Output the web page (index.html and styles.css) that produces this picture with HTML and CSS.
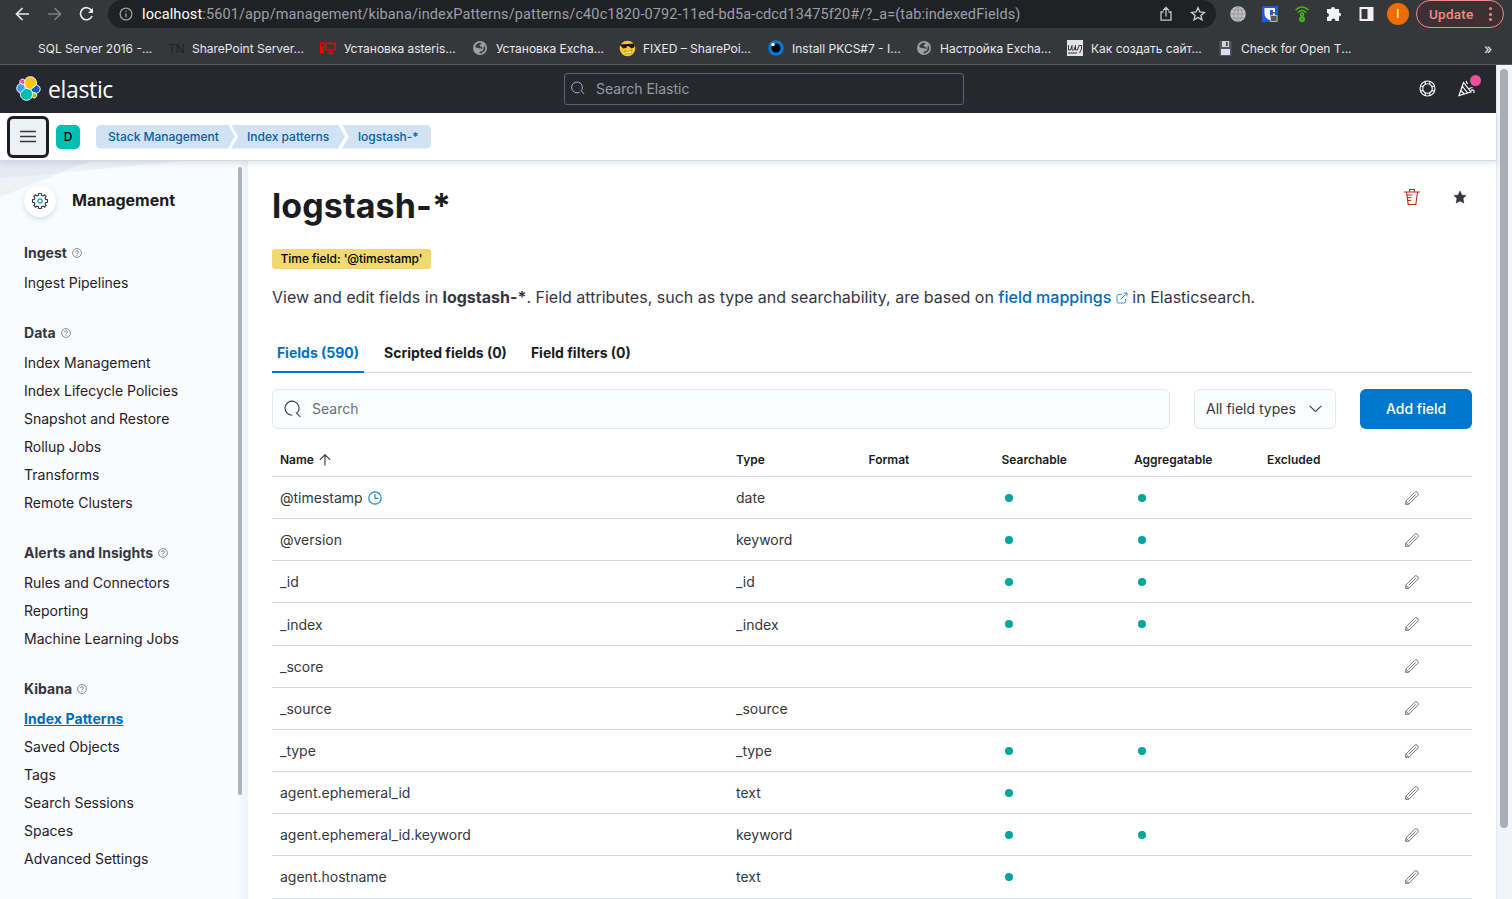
FILE: index.html
```html
<!DOCTYPE html>
<html lang="en">
<head>
<meta charset="utf-8">
<title>logstash-* - Elastic</title>
<link rel="stylesheet" href="styles.css">
</head>
<body>
<svg class="defs" width="0" height="0" aria-hidden="true">
  <symbol id="globe" viewBox="0 0 14 14"><circle cx="7" cy="7" r="7" fill="#9aa0a6"/><path d="M2 5 5 2 8 1.800 8.500 3 6.500 4 7 5.500 9 6 9.500 8 8 7.500 5 7 3 6.500ZM11 4 12.500 7 11.500 10 8 12.500 6 12 7.500 10.500 10 9.500 10.500 7Z" fill="#3a3b3f"/></symbol>
  <symbol id="help" viewBox="0 0 10 10"><circle cx="5" cy="5" r="4.400" fill="none" stroke="#7b808b" stroke-width=".9"/><path d="M3.600 4.100a1.400 1.300 0 1 1 2 1.100C5.100 5.500 5 5.600 5 6.200M5 6.900v.9" fill="none" stroke="#6b707b" stroke-width=".9"/></symbol>
  <symbol id="pencil" viewBox="0 0 16 16"><path d="M1.700 14.300V11.200L10.800 2.100Q11.900 1.200 13 2.100L13.900 3Q14.800 4.100 13.900 5.200L4.800 14.300ZM2 11.200 4.900 14M4.700 11.300 11.700 4.300" fill="none" stroke="#77797f" stroke-width="1"/><path d="M1.500 14.500V12.500L3.700 14.500Z" fill="#77797f"/></symbol>
</svg>

<div class="browser">
  <div class="toolbar">
    <svg class="nav" width="100" height="28" viewBox="0 0 100 28" fill="none" stroke-width="1.700"><path d="M29 14H17M22.500 8 16.500 14 22.500 20" stroke="#e8eaed"/><path d="M48 14H60M54.500 8 60.500 14 54.500 20" stroke="#7c7d80"/><path d="M91.500 10.500A6 6 0 1 0 92 16" stroke="#e8eaed"/><path d="M93 8V13H88Z" fill="#e8eaed"/></svg>
    <div class="url">
      <svg width="14" height="14" viewBox="0 0 14 14" fill="none" stroke="#9aa0a6" stroke-width="1.300"><circle cx="7" cy="7" r="5.900"/><path d="M7 6.200V10.200M7 3.700V5.100"/></svg>
      <span class="address"><b>localhost</b>:5601/app/management/kibana/indexPatterns/patterns/c40c1820-0792-11ed-bd5a-cdcd13475f20#/?_a=(tab:indexedFields)</span>
      <svg class="share" width="14" height="16" viewBox="0 0 14 16" fill="none" stroke="#c4c7ca" stroke-width="1.300"><path d="M4.500 6H2V14.200H12V6H9.500M7 10.500V2M4 4.500 7 1.500 10 4.500"/></svg>
      <svg class="fav" width="16" height="16" viewBox="0 0 16 16" fill="none" stroke="#d0d3d6" stroke-width="1.300"><path d="M8 1.700 9.800 6 14.400 6.400 10.900 9.400 12 13.900 8 11.500 4 13.900 5.100 9.400 1.600 6.400 6.200 6Z"/></svg>
    </div>
    <div class="extensions">
      <svg width="16" height="16" viewBox="0 0 16 16"><circle cx="8" cy="8" r="7.800" fill="#c4c4c4"/><path d="M8 0V16M0 8H16M2 4H14M2 12H14M8 .3C2.500 4 2.500 12 8 15.700M8 .3C13.500 4 13.500 12 8 15.700" fill="none" stroke="#85878a" stroke-width=".7"/></svg>
      <svg width="16" height="16" viewBox="0 0 16 16"><path d="M0 0H16V16H0Z" fill="#175ddc"/><path d="M2.500 2H13V8C13 11 10.500 13 8 14.300 5 13 2.500 11 2.500 8Z" fill="#fff"/><path d="M8 4H11V8C11 10 9.500 11.500 8 12.200Z" fill="#175ddc"/><path d="M10 9.500V8.500a1.800 1.800 0 0 1 3.600 0V9.500" stroke="#555" stroke-width="1.300" fill="none"/><path d="M8.500 9.500H15V15.500H8.500Z" fill="#555" stroke="#ddd" stroke-width=".7"/></svg>
      <svg width="16" height="18" viewBox="0 0 16 18" fill="none" stroke="#45b816" stroke-width="1.600"><path d="M1.500 5Q8-1 14.500 5M3.800 7.500Q8 3.500 12.200 7.500"/><circle cx="8" cy="9.500" r="1.500"/><path d="M8 11V13" /><circle cx="8" cy="14.300" r="1.900" stroke-width="2.200"/></svg>
      <svg width="16" height="16" viewBox="0 0 16 16"><path d="M1 3H5a2 2 0 1 1 4 0H13V6.500a2 2 0 1 1 0 4V15H9.300a2 2 0 1 0-3.800 0H1V11a2 2 0 1 0 0-4Z" fill="#f1f2f3"/></svg>
      <svg width="16" height="16" viewBox="0 0 16 16"><path d="M1.500 1H15.500V15H1.500Z" fill="#f1f1f1"/><path d="M3.500 3H9.500V13H3.500Z" fill="#36373b"/></svg>
      <span class="profile">I</span>
    </div>
    <div class="update">Update<span class="dots"><i></i><i></i><i></i></span></div>
  </div>
  <div class="bookmarks">
    <span class="bm">SQL Server 2016 -...</span>
    <span class="bm"><i class="tn">TN</i>SharePoint Server...</span>
    <span class="bm"><svg width="16" height="14" viewBox="0 0 17 14"><path d="M0 1H4V13H0Z" fill="#f00"/><path d="M6 2H16V9H6ZM11 9V12M8 12.500H14" fill="none" stroke="#f00" stroke-width="1.500"/><path d="M1 3H3M1 5H3" stroke="#500"/></svg><em>Установка asteris...</em></span>
    <span class="bm"><svg width="14" height="14"><use href="#globe"/></svg><em class="wide">Установка Excha...</em></span>
    <span class="bm"><svg width="17" height="17" viewBox="0 0 17 17"><circle cx="8.500" cy="8.500" r="7.800" fill="#f8c72b"/><path d="M.5 4.500 15.500 3.500 15.500 7 12.500 8.500 10 6.500 8.500 6 7 8 4 8.500 2 6Z" fill="#1c1a12"/><path d="M5 11Q10 13 13 10L12 13.500H7Z" fill="#fff" stroke="#a66b00" stroke-width=".6"/></svg><em class="tight">FIXED – SharePoi...</em></span>
    <span class="bm"><svg width="16" height="16" viewBox="0 0 16 16"><circle cx="8" cy="8" r="7.800" fill="#0877cf"/><circle cx="8" cy="8" r="4.500" fill="#02060c"/><circle cx="5" cy="4.500" r="1.800" fill="#fff"/></svg><em>Install PKCS#7 - I...</em></span>
    <span class="bm"><svg width="14" height="14"><use href="#globe"/></svg><em class="wide">Настройка Excha...</em></span>
    <span class="bm"><svg width="16" height="16" viewBox="0 0 16 16"><path d="M0 0H16V16H0Z" fill="#e2e2e2"/><path d="M1.500 5V10H3.500L5 5.500V10H7L8.500 5.500V10H10.500L12 5.500H14.500V9L12.500 13M1 13H10" fill="none" stroke="#333" stroke-width="1"/></svg><em>Как создать сайт...</em></span>
    <span class="bm"><svg width="15" height="15" viewBox="0 0 14 15"><path d="M1 0H13V15H1Z" fill="#55575b"/><path d="M3.500 0H10.500V6H3.500Z" fill="#d0d2d4"/><path d="M7.500 1H9V5H7.500Z" fill="#333"/><path d="M2.500 8H11.500V14H2.500Z" fill="#dedcf5"/></svg><em>Check for Open T...</em></span>
    <span class="more">»</span>
  </div>
</div>

<div class="viewport">
 <div class="page">
  <header class="topbar">
    <div class="brand">
      <svg width="25" height="25" viewBox="0 0 25 25" stroke="#fff" stroke-width=".9"><path d="M4 7.500Q3 3.500 6.500 2.900L9.500 4.500 8.500 9Z" fill="#f04e98"/><path d="M8.500 9 4.300 7.400Q.6 8.800.6 12.300T4.300 17L9.500 12.500Z" fill="#36a2ef"/><path d="M20.500 8.800Q24.300 10 24.300 13T20.700 17.500L15.500 16 14.500 13Z" fill="#0b64c0"/><path d="M15.500 16 20.600 17.600Q21.500 21.500 18 22.200L15 20Z" fill="#93c90e"/><path d="M8.700 8.500C8 3 10.500.7 14.500.7S21 4 20.500 8.800L14.500 13.700 9.500 12Z" fill="#fec514"/><path d="M9.500 12 15 13.700 16.300 16.500C17 21 14.500 24.300 10.500 24.300S4 21 4.300 17Z" fill="#02bcb0"/></svg>
      <span class="wordmark">elastic</span>
    </div>
    <div class="global-search"><svg width="14" height="14" viewBox="0 0 14 14" fill="none" stroke="#a9adb5" stroke-width="1"><path d="M8.500 11.200A5.400 5.400 0 1 1 10.200 9.800L13.200 13"/></svg>Search Elastic</div>
    <div class="top-actions">
      <svg width="17" height="17" viewBox="0 0 17 17" fill="none" stroke="#fff" stroke-width="1.100"><circle cx="8.500" cy="8.500" r="7.500"/><circle cx="8.500" cy="8.500" r="4.800"/><path d="M6.200 1.500V4.500M10.800 1.500V4.500M6.200 12.500V15.500M10.800 12.500V15.500M1.500 6.200H4.500M1.500 10.800H4.500M12.500 6.200H15.500M12.500 10.800H15.500"/></svg>
      <span class="news"><svg width="18" height="17" viewBox="0 0 18 17" fill="none" stroke="#fff" stroke-width="1.200"><path d="M5.500 2.500 13 12 1 15.500ZM4.500 6.500 9.500 13M3 10.500 6 14M8 1 9.500 4M11 8.500 14.500 7.500M13 10.500Q16.500 8.500 16 13"/></svg><i class="news-dot"></i></span>
    </div>
  </header>
  <div class="subbar">
    <button class="menu"><svg width="16" height="13" viewBox="0 0 16 13" fill="#343741"><path d="M0 .8H16V2.200H0ZM0 5.800H16V7.200H0ZM0 10.800H16V12.200H0Z"/></svg></button>
    <span class="space">D</span>
    <nav class="crumbs"><span class="crumb c1">Stack Management</span><span class="crumb c2">Index patterns</span><span class="crumb c3">logstash-*</span></nav>
  </div>
  <div class="body">
    <aside class="sidebar">
      <svg class="decor" width="248" height="40" viewBox="0 0 248 40"><path d="M0 0H180L60 12 0 36Z" fill="#eef1f7"/><path d="M0 0H90L55 13 0 17Z" fill="#e5e9f2"/></svg>
      <div class="side-head"><span class="gear"><svg width="18" height="18" viewBox="0 0 18 18" fill="none"><path d="M7.700 1.500H10.300L10.600 3.300 12 3.900 13.500 2.800 15.200 4.500 14.100 6 14.700 7.400 16.500 7.700V10.300L14.700 10.600 14.100 12 15.200 13.500 13.500 15.200 12 14.100 10.600 14.700 10.300 16.500H7.700L7.400 14.700 6 14.100 4.500 15.200 2.800 13.500 3.900 12 3.300 10.600 1.500 10.300V7.700L3.300 7.400 3.900 6 2.800 4.500 4.500 2.800 6 3.900 7.400 3.300Z" stroke="#343741" stroke-width="1.100"/><circle cx="9" cy="9" r="2.200" stroke="#00a9a0" stroke-width="1.200"/></svg></span><h2>Management</h2></div>
      <section><h3>Ingest<svg width="10" height="10"><use href="#help"/></svg></h3><a>Ingest Pipelines</a></section>
      <section><h3>Data<svg width="10" height="10"><use href="#help"/></svg></h3><a>Index Management</a><a>Index Lifecycle Policies</a><a>Snapshot and Restore</a><a>Rollup Jobs</a><a>Transforms</a><a>Remote Clusters</a></section>
      <section><h3>Alerts and Insights<svg width="10" height="10"><use href="#help"/></svg></h3><a>Rules and Connectors</a><a>Reporting</a><a>Machine Learning Jobs</a></section>
      <section><h3>Kibana<svg width="10" height="10"><use href="#help"/></svg></h3><a class="active">Index Patterns</a><a>Saved Objects</a><a>Tags</a><a>Search Sessions</a><a>Spaces</a><a>Advanced Settings</a></section>
      <i class="side-thumb"></i>
    </aside>
    <main>
      <div class="title-row"><h1>logstash-*</h1>
        <div class="title-actions">
          <svg width="16" height="18" viewBox="0 0 16 18" fill="none" stroke="#bd271e" stroke-width="1.100"><path d="M0 4H16M5.500 4V1.500H10.500V4M2.500 4 4.200 16.500H11.800L13.500 4M3 7H8.500M3.500 9.700H7.500M4 12.500H7"/></svg>
          <svg width="14" height="14" viewBox="0 0 14 14"><path d="M7 1 8.800 5 13 5.500 10 8.400 10.800 13 7 10.900 3.200 13 4 8.400 1 5.500 5.200 5Z" fill="#343741" stroke="#343741" stroke-width=".6"/></svg>
        </div>
      </div>
      <span class="badge">Time field: '@timestamp'</span>
      <p class="desc">View and edit fields in <b>logstash-*</b>. Field attributes, such as type and searchability, are based on <a>field mappings</a> <svg width="12" height="12" viewBox="0 0 12 12" fill="none" stroke="#3a8fd6" stroke-width="1"><path d="M5.500 2.500H2.500Q1 2.500 1 4V9.500Q1 11 2.500 11H8Q9.500 11 9.500 9.500V7M7.500 1H11V4.500M11 1 4.800 7.200"/></svg> in Elasticsearch.</p>
      <div class="tabs"><span class="tab on">Fields (590)</span><span class="tab t2">Scripted fields (0)</span><span class="tab">Field filters (0)</span></div>
      <div class="controls">
        <div class="search"><svg width="17" height="18" viewBox="0 0 17 18" fill="none" stroke="#343741" stroke-width="1.100"><path d="M8.300 15.200A7 7 0 1 1 14.200 11.500Q13.500 12.500 12.500 12.900L16.300 17"/></svg>Search</div>
        <div class="filter">All field types<svg width="13" height="8" viewBox="0 0 13 8" fill="none" stroke="#343741" stroke-width="1.100"><path d="M.7.8 6 6.200Q6.500 6.700 7 6.200L12.300.8"/></svg></div>
        <button class="add">Add field</button>
      </div>
      <div class="table">
        <div class="tr th"><span>Name<svg width="12" height="12" viewBox="0 0 12 12" fill="none" stroke="#343741" stroke-width="1.100"><path d="M6 11.500V1M.8 5.800 6 .8 11.200 5.800"/></svg></span><span>Type</span><span>Format</span><span>Searchable</span><span>Aggregatable</span><span>Excluded</span><span></span></div>
        <div class="tr"><span>@timestamp<svg width="14" height="14" viewBox="0 0 14 14" fill="none" stroke="#1885d8" stroke-width="1.200"><circle cx="7" cy="7" r="6.200"/><path d="M7 3V7.300H10.500"/></svg></span><span>date</span><span></span><span><i class="dot"></i></span><span><i class="dot"></i></span><span></span><span><svg width="16" height="16"><use href="#pencil"/></svg></span></div>
        <div class="tr"><span>@version</span><span>keyword</span><span></span><span><i class="dot"></i></span><span><i class="dot"></i></span><span></span><span><svg width="16" height="16"><use href="#pencil"/></svg></span></div>
        <div class="tr"><span>_id</span><span>_id</span><span></span><span><i class="dot"></i></span><span><i class="dot"></i></span><span></span><span><svg width="16" height="16"><use href="#pencil"/></svg></span></div>
        <div class="tr"><span>_index</span><span>_index</span><span></span><span><i class="dot"></i></span><span><i class="dot"></i></span><span></span><span><svg width="16" height="16"><use href="#pencil"/></svg></span></div>
        <div class="tr"><span>_score</span><span></span><span></span><span></span><span></span><span></span><span><svg width="16" height="16"><use href="#pencil"/></svg></span></div>
        <div class="tr"><span>_source</span><span>_source</span><span></span><span></span><span></span><span></span><span><svg width="16" height="16"><use href="#pencil"/></svg></span></div>
        <div class="tr"><span>_type</span><span>_type</span><span></span><span><i class="dot"></i></span><span><i class="dot"></i></span><span></span><span><svg width="16" height="16"><use href="#pencil"/></svg></span></div>
        <div class="tr"><span>agent.ephemeral_id</span><span>text</span><span></span><span><i class="dot"></i></span><span></span><span></span><span><svg width="16" height="16"><use href="#pencil"/></svg></span></div>
        <div class="tr"><span>agent.ephemeral_id.keyword</span><span>keyword</span><span></span><span><i class="dot"></i></span><span><i class="dot"></i></span><span></span><span><svg width="16" height="16"><use href="#pencil"/></svg></span></div>
        <div class="tr"><span>agent.hostname</span><span>text</span><span></span><span><i class="dot"></i></span><span></span><span></span><span><svg width="16" height="16"><use href="#pencil"/></svg></span></div>
      </div>
    </main>
  </div>
 </div>
 <div class="scrollbar"><i></i></div>
</div>
</body>
</html>
```
FILE: styles.css
```css
* { box-sizing: border-box; }
body { margin: 0; width: 1512px; height: 899px; overflow: hidden; display: flex; flex-direction: column; font: 14px Inter, "Liberation Sans", sans-serif; color: #343741; background: #fff; }
.defs { position: absolute; }
svg { flex: none; }
h1, h2, h3, p { margin: 0; }

.browser { height: 65px; background: #36373b; border-bottom: 1px solid #57585c; color: #e8eaed; flex: none; }
.toolbar { display: flex; height: 28px; align-items: center; }
.nav { margin-right: 8px; }
.url { width: 1108px; height: 28px; padding: 0 10px 0 11px; background: #202124; border-radius: 14px; display: flex; align-items: center; font-family: Roboto, sans-serif; }
.address { margin-left: 9px; padding-top: 1px; white-space: nowrap; color: #9aa0a6; font-size: 14.500px; letter-spacing: .115px; }
.address b { color: #fff; font-weight: 400; }
.share { margin-left: auto; margin-right: 17px; }
.extensions { display: flex; align-items: center; gap: 16px; margin-left: 14px; }
.profile { width: 22px; height: 22px; margin-left: -3px; border-radius: 50%; background: #ef6c00; color: #fff; font: 12px/22px Roboto, sans-serif; text-align: center; }
.update { margin-left: 7px; width: 88px; height: 28px; border: 1.500px solid #f28b82; border-radius: 14px; background: #3d3033; color: #f28b82; display: flex; align-items: center; justify-content: space-between; padding: 0 11px 0 12px; font: 500 13.500px Roboto, sans-serif; letter-spacing: .25px; }
.dots { display: flex; flex-direction: column; gap: 2.500px; }
.dots i { width: 3px; height: 3px; border-radius: 50%; background: #f28b82; }
.bookmarks { display: grid; grid-template-columns: 130px 152px 153px 146px 149px 149px 150px 151px 1fr 20px; height: 36px; padding: 4px 8px 0 38px; align-items: center; font: 12px Inter, sans-serif; }
.bm { display: flex; align-items: center; white-space: nowrap; }
.bm em { font-style: normal; margin-left: 8px; }
.bm .wide { margin-left: 9px; }
.bm .tight { margin-left: 7px; }
.tn { color: #202124; width: 24px; font-style: normal; }
.more { font-size: 14px; }

.viewport { display: flex; flex: 1; min-height: 0; }
.page { width: 1496px; display: flex; flex-direction: column; }
.scrollbar { width: 16px; background: #f3f4f7; border-left: 1px solid #e6e8ec; padding: 4px 4px 0 3px; }
.scrollbar i { display: block; height: 759px; width: 8px; border-radius: 4px; background: #a9adb7; }
.topbar { height: 48px; flex: none; background: #25282f; display: flex; align-items: center; padding: 0 20px 1px 16px; }
.brand { width: 548px; display: flex; align-items: center; gap: 7px; }
.wordmark { color: #fff; font: 400 23px/30px "Open Sans", sans-serif; letter-spacing: -.35px; }
.global-search { width: 400px; height: 32px; margin-top: 1px; border: 1px solid #60646c; border-radius: 3px; padding: 0 7px 2px 6px; display: flex; align-items: center; gap: 11px; color: #969aa3; }
.top-actions { margin-left: auto; display: flex; align-items: center; gap: 22px; }
.news { position: relative; display: flex; }
.news-dot { position: absolute; left: 12px; top: -5px; width: 11px; height: 11px; border-radius: 50%; background: #f04e98; }
.subbar { height: 48px; flex: none; border-bottom: 1px solid #d3dae6; box-shadow: 0 2px 6px rgba(70,80,100,.16); z-index: 2; position: relative; background: #fff; display: flex; align-items: center; padding: 0 0 0 7px; }
.menu { width: 42px; height: 42px; padding: 0; border: 3px solid #1d1e24; border-radius: 6px; background: #eff0f3; display: flex; align-items: center; justify-content: center; }
.space { margin-left: 7px; width: 24px; height: 24px; border-radius: 5px; background: #00bfb3; color: #000; font: 500 12px/24px Inter, sans-serif; text-align: center; }
.crumbs { margin-left: 16px; display: flex; font: 500 12px/24px Inter, sans-serif; color: #0061a6; }
.crumb { height: 24px; background: #d2e2f5; white-space: nowrap; }
.c1 { width: 139px; padding-left: 12px; border-radius: 5px 0 0 5px; clip-path: polygon(0 0, 132px 0, 139px 50%, 132px 100%, 0 100%); }
.c2 { width: 115px; margin-left: -4px; padding-left: 16px; clip-path: polygon(0 0, 107px 0, 114px 50%, 107px 100%, 0 100%, 7px 50%); }
.c3 { width: 89px; margin-left: -4px; padding-left: 16px; border-radius: 0 5px 5px 0; clip-path: polygon(0 0, 100% 0, 100% 100%, 0 100%, 7px 50%); }

.body { display: flex; flex: 1; min-height: 0; }
.sidebar { position: relative; width: 248px; background: linear-gradient(90deg, #fafbfd 237px, #eff1f4); padding: 24px; flex: none; }
.decor { position: absolute; left: 0; top: 0; }
.side-head { position: relative; display: flex; height: 32px; gap: 16px; margin-bottom: 26px; }
.gear { width: 32px; height: 32px; border-radius: 50%; background: #fff; box-shadow: 0 2px 5px rgba(60,70,90,.18); display: flex; align-items: center; justify-content: center; }
h2 { font-size: 16px; line-height: 30px; font-weight: 700; color: #1a1c21; }
section { margin-bottom: 26px; }
h3 { height: 20px; margin-bottom: 6px; font-size: 14px; line-height: 20px; font-weight: 700; letter-spacing: .04px; display: flex; align-items: center; gap: 5px; }
section a { display: block; height: 28px; line-height: 28px; color: #1f2127; white-space: nowrap; }
section .active { color: #006bb8; font-weight: 700; letter-spacing: .08px; text-decoration: underline; }
.side-thumb { position: absolute; left: 238px; top: 6px; width: 4px; height: 628px; border-radius: 2px; background: #abb2bb; }

main { width: 1248px; padding: 24px; }
.title-row { height: 40px; display: flex; justify-content: space-between; }
h1 { font-size: 34px; line-height: 42px; font-weight: 700; letter-spacing: .1px; color: #1a1c21; }
.title-actions { display: flex; gap: 33px; height: 24px; align-items: center; padding-right: 5px; }
.badge { display: block; width: 159px; height: 20px; margin-top: 24px; border-radius: 3px; background: #f1d86f; color: #000; font: 500 12px/20px Inter, sans-serif; letter-spacing: -.05px; text-align: center; white-space: nowrap; }
.desc { margin-top: 16px; font-size: 16px; line-height: 24px; white-space: nowrap; }
.desc a { color: #006bb8; font-weight: 500; }
.desc b { font-weight: 700; }
.desc svg { vertical-align: -1px; }
.tabs { height: 40px; margin-top: 24px; display: flex; border-bottom: 1px solid #d3dae6; }
.tab { height: 40px; line-height: 40px; font-weight: 700; color: #1a1c21; margin-left: 24px; white-space: nowrap; }
.tab.on { margin: 0; width: 92px; text-align: center; color: #0071c2; border-bottom: 2px solid #0077cc; }
.tab.t2 { margin-left: 20px; }
.controls { display: flex; height: 40px; margin-top: 16px; }
.search, .filter { border: 1px solid #e3e7f0; border-radius: 6px; background: #fbfcfd; display: flex; align-items: center; white-space: nowrap; }
.search { width: 898px; padding: 0 0 1px 11px; gap: 11px; color: #69707d; }
.filter { width: 142px; margin-left: 24px; padding: 0 13px 1px 11px; justify-content: space-between; }
.add { width: 112px; margin-left: 24px; padding: 0 0 2px; border: 0; border-radius: 6px; background: #0077cc; color: #fff; font: 500 14px Inter, sans-serif; }
.table { margin-top: 14px; }
.tr { display: grid; grid-template-columns: 456px 132.500px 133px 132.500px 133px 137px 1fr; height: 42.170px; padding-left: 8px; border-bottom: 1px solid #d3dae6; align-items: center; }
.tr span { display: flex; align-items: center; gap: 5px; }
.th { height: 34px; font-size: 12px; font-weight: 600; color: #1a1c21; }
.dot { width: 8px; height: 8px; margin-left: 3.500px; border-radius: 50%; background: #00a69b; }
```
